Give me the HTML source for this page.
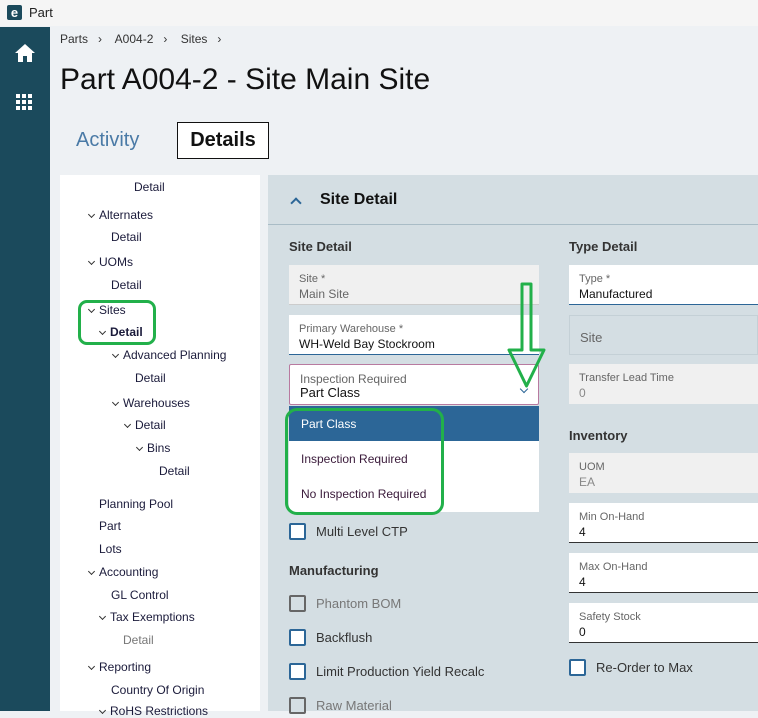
<!DOCTYPE html>
<html><head><style>
*{margin:0;padding:0;box-sizing:border-box}
body{width:758px;height:711px;overflow:hidden;background:#eef1f4;font-family:"Liberation Sans",sans-serif;position:relative;color:#222}
.a{position:absolute;white-space:nowrap}
.t{font-size:12px;color:#1a1a3a}
.c{display:inline-block;width:5px;height:5px;border-right:1px solid #333;border-bottom:1px solid #333;transform:rotate(45deg);margin:0 5px 3px 1px;vertical-align:middle}
.f{position:absolute;height:40px}
.lab{position:absolute;left:10px;top:8px;font-size:11px;color:#666}
.val{position:absolute;left:10px;top:22px;font-size:12px;color:#111}
.cb{position:absolute;width:17px;height:17px;border:2px solid #2c6697;border-radius:2px;background:#fff}
.cl{position:absolute;font-size:13px;color:#333}
</style></head><body>
<div class="a" style="left:0;top:0;width:758px;height:26px;background:#f5f5f5"></div>
<div class="a" style="left:7px;top:5px;width:15px;height:15px;background:#1b4a5c;border-radius:2px;color:#fff;font-size:13px;font-weight:bold;line-height:15px;text-align:center">e</div>
<div class="a" style="left:29px;top:5px;font-size:13px">Part</div>
<div class="a" style="left:0;top:27px;width:50px;height:684px;background:#1b4a5c"></div>
<svg class="a" style="left:14px;top:43px" width="22" height="20" viewBox="0 0 22 20"><path d="M11 1L1 10h3v9h5v-6h4v6h5v-9h3z" fill="#fff"/></svg>
<svg class="a" style="left:16px;top:94px" width="18" height="18"><g fill="#fff"><rect x="0" y="0" width="4" height="4"/><rect x="6" y="0" width="4" height="4"/><rect x="12" y="0" width="4" height="4"/><rect x="0" y="6" width="4" height="4"/><rect x="6" y="6" width="4" height="4"/><rect x="12" y="6" width="4" height="4"/><rect x="0" y="12" width="4" height="4"/><rect x="6" y="12" width="4" height="4"/><rect x="12" y="12" width="4" height="4"/></g></svg>
<div class="a" style="left:60px;top:32px;font-size:12px;color:#333">Parts &nbsp;&nbsp;›&nbsp;&nbsp;&nbsp; A004-2 &nbsp;&nbsp;›&nbsp;&nbsp;&nbsp; Sites &nbsp;&nbsp;›</div>
<div class="a" style="left:60px;top:63px;font-size:30px;color:#111">Part A004-2 - Site Main Site</div>
<div class="a" style="left:76px;top:129px;font-size:20px;color:#4a7aa6">Activity</div>
<div class="a" style="left:177px;top:122px;width:92px;height:37px;border:1px solid #111;background:#fff;font-size:20px;color:#111;text-align:center;line-height:35px;font-weight:600">Details</div>
<div class="a" style="left:60px;top:175px;width:200px;height:536px;background:#fff"></div>
<div class="a t" style="left:134px;top:180px">Detail</div>
<div class="a t" style="left:88px;top:208px"><i class="c"></i>Alternates</div>
<div class="a t" style="left:111px;top:230px">Detail</div>
<div class="a t" style="left:88px;top:255px"><i class="c"></i>UOMs</div>
<div class="a t" style="left:111px;top:278px">Detail</div>
<div class="a t" style="left:88px;top:303px"><i class="c"></i>Sites</div>
<div class="a t" style="left:99px;top:325px;font-weight:bold"><i class="c"></i>Detail</div>
<div class="a t" style="left:112px;top:348px"><i class="c"></i>Advanced Planning</div>
<div class="a t" style="left:135px;top:371px">Detail</div>
<div class="a t" style="left:112px;top:396px"><i class="c"></i>Warehouses</div>
<div class="a t" style="left:124px;top:418px"><i class="c"></i>Detail</div>
<div class="a t" style="left:136px;top:441px"><i class="c"></i>Bins</div>
<div class="a t" style="left:159px;top:464px">Detail</div>
<div class="a t" style="left:99px;top:497px">Planning Pool</div>
<div class="a t" style="left:99px;top:519px">Part</div>
<div class="a t" style="left:99px;top:542px">Lots</div>
<div class="a t" style="left:88px;top:565px"><i class="c"></i>Accounting</div>
<div class="a t" style="left:111px;top:588px">GL Control</div>
<div class="a t" style="left:99px;top:610px"><i class="c"></i>Tax Exemptions</div>
<div class="a t" style="left:123px;top:633px;color:#777">Detail</div>
<div class="a t" style="left:88px;top:660px"><i class="c"></i>Reporting</div>
<div class="a t" style="left:111px;top:683px">Country Of Origin</div>
<div class="a t" style="left:99px;top:704px"><i class="c"></i>RoHS Restrictions</div>
<div class="a" style="left:268px;top:175px;width:490px;height:536px;background:#d4dee3"></div>
<div class="a" style="left:268px;top:224px;width:490px;height:1px;background:#a9bcc6"></div>
<div class="a" style="left:292px;top:199px;width:8px;height:8px;border-left:2px solid #2c6697;border-top:2px solid #2c6697;transform:rotate(45deg)"></div>
<div class="a" style="left:320px;top:191px;font-size:16px;font-weight:bold;color:#111">Site Detail</div>
<div class="a" style="left:289px;top:239px;font-size:13px;font-weight:bold;color:#333">Site Detail</div>
<div class="a" style="left:569px;top:239px;font-size:13px;font-weight:bold;color:#333">Type Detail</div>
<div class="f" style="left:289px;top:265px;width:250px;background:#f0f0f0;border-bottom:1px solid #ccc"><div class="lab">Site *</div><div class="val" style="color:#666">Main Site</div></div>
<div class="f" style="left:289px;top:315px;width:250px;background:#fff;border-bottom:1px solid #2c6697"><div class="lab">Primary Warehouse *</div><div class="val">WH-Weld Bay Stockroom</div></div>
<div class="f" style="left:289px;top:364px;width:250px;height:41px;background:#fff;border:1px solid #b87aa0;border-radius:2px"><div class="lab" style="top:7px;font-size:12px">Inspection Required</div><div class="val" style="top:20px;font-size:13px">Part Class</div><div class="a" style="left:231px;top:21px;width:6px;height:6px;border-right:1px solid #2c6697;border-bottom:1px solid #2c6697;transform:rotate(45deg)"></div></div>
<div class="a" style="left:289px;top:406px;width:250px;height:106px;background:#fff"></div>
<div class="a" style="left:289px;top:406px;width:250px;height:35px;background:#2c6697"></div>
<div class="a" style="left:301px;top:417px;font-size:12px;color:#fff">Part Class</div>
<div class="a" style="left:301px;top:452px;font-size:12px;color:#3a1a3a">Inspection Required</div>
<div class="a" style="left:301px;top:487px;font-size:12px;color:#3a1a3a">No Inspection Required</div>
<div class="cb" style="left:289px;top:523px"></div><div class="cl" style="left:316px;top:524px">Multi Level CTP</div>
<div class="a" style="left:289px;top:563px;font-size:13px;font-weight:bold;color:#333">Manufacturing</div>
<div class="cb" style="left:289px;top:595px;border-color:#666;background:#d4dee3"></div><div class="cl" style="left:316px;top:596px;color:#777">Phantom BOM</div>
<div class="cb" style="left:289px;top:629px"></div><div class="cl" style="left:316px;top:630px">Backflush</div>
<div class="cb" style="left:289px;top:663px"></div><div class="cl" style="left:316px;top:664px">Limit Production Yield Recalc</div>
<div class="cb" style="left:289px;top:697px;border-color:#666;background:#d4dee3"></div><div class="cl" style="left:316px;top:698px;color:#777">Raw Material</div>
<div class="f" style="left:569px;top:265px;width:189px;background:#fff;border-bottom:1px solid #2c6697"><div class="lab">Type *</div><div class="val">Manufactured</div></div>
<div class="f" style="left:569px;top:315px;width:189px;background:#d4dee3;border:1px solid #c4d0d6"><div class="lab" style="top:14px;font-size:13px">Site</div></div>
<div class="f" style="left:569px;top:364px;width:189px;background:#f0f0f0"><div class="lab">Transfer Lead Time</div><div class="val" style="color:#888">0</div></div>
<div class="a" style="left:569px;top:428px;font-size:13px;font-weight:bold;color:#333">Inventory</div>
<div class="f" style="left:569px;top:453px;width:189px;background:#f0f0f0"><div class="lab">UOM</div><div class="val" style="color:#888">EA</div></div>
<div class="f" style="left:569px;top:503px;width:189px;background:#fff;border-bottom:1px solid #333"><div class="lab">Min On-Hand</div><div class="val">4</div></div>
<div class="f" style="left:569px;top:553px;width:189px;background:#fff;border-bottom:1px solid #333"><div class="lab">Max On-Hand</div><div class="val">4</div></div>
<div class="f" style="left:569px;top:603px;width:189px;background:#fff;border-bottom:1px solid #333"><div class="lab">Safety Stock</div><div class="val">0</div></div>
<div class="cb" style="left:569px;top:659px"></div><div class="cl" style="left:596px;top:660px">Re-Order to Max</div>
<div class="a" style="left:78px;top:300px;width:78px;height:45px;border:3px solid #22b04a;border-radius:9px"></div>
<div class="a" style="left:285px;top:408px;width:159px;height:107px;border:3px solid #22b04a;border-radius:12px"></div>
<svg class="a" style="left:505px;top:278px" width="45" height="115"><path d="M17 6h9v66h13L21.5 108 4 72h13z" fill="none" stroke="#22b04a" stroke-width="3" stroke-linejoin="round"/></svg>
</body></html>
